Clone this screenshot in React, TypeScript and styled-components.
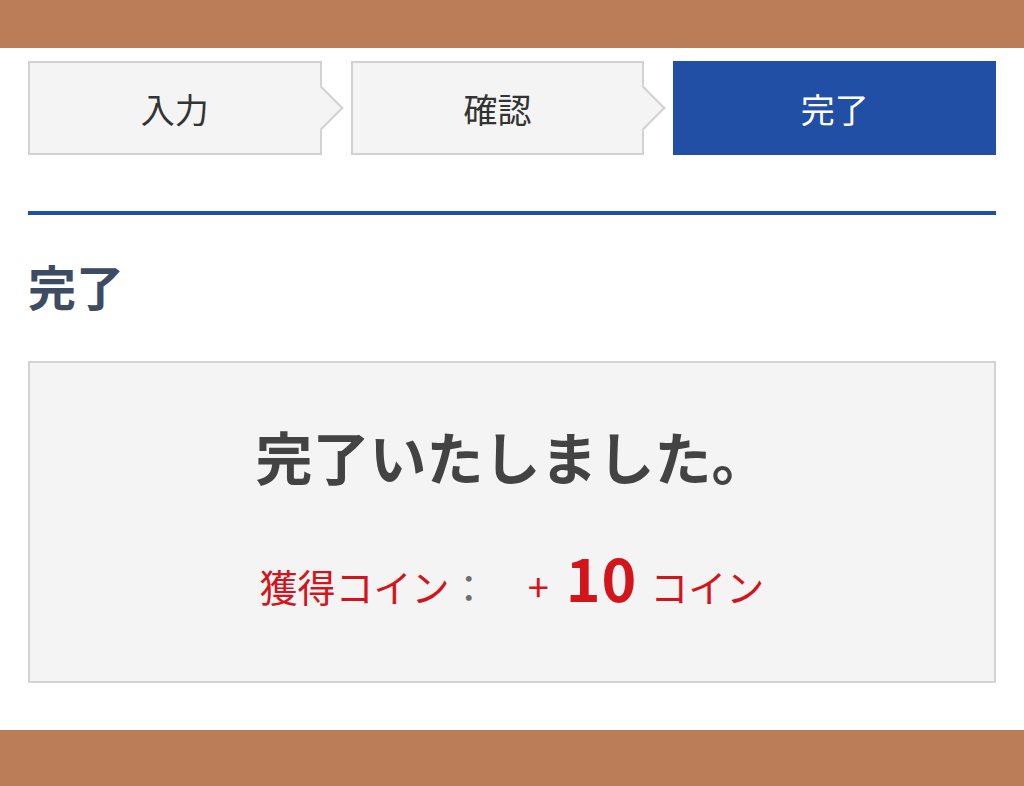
import * as React from 'react';
import styled, { createGlobalStyle } from 'styled-components';

const GlobalStyle = createGlobalStyle`
    html, body {
        margin: 0;
        padding: 0;
        background: #fff;
    }
    body {
        font-family: "Noto Sans CJK JP", "Noto Sans", sans-serif;
    }
`

const Page = styled.div`
    display: flex;
    flex-direction: column;
    height: 786px;
`
const Bar = styled.div<{ $h: number }>`
    background: #bb7c58;
    height: ${p => p.$h}px;
    flex-shrink: 0;
`
const Main = styled.main`
    flex: 1;
    padding: 13px 28px 0;
`
const Steps = styled.ol`
    display: grid;
    grid-template-columns: repeat(3, 1fr);
    list-style: none;
    margin: 0;
    padding: 0;
`
interface StepProps {
    $active?: boolean,
    $arrow?: boolean,
}
const Step = styled.li<StepProps>`
    position: relative;
    height: 94px;
    box-sizing: border-box;
    margin-right: ${p => (p.$arrow ? '29px' : '0')};
    display: flex;
    align-items: center;
    justify-content: center;
    font-size: 34px;
    color: ${p => (p.$active ? '#fff' : '#333')};
    background: ${p => (p.$active ? '#214fa5' : '#f4f4f4')};
    border: 2px solid ${p => (p.$active ? '#214fa5' : '#d2d2d2')};
    &::after {
        content: '';
        display: ${p => (p.$arrow ? 'block' : 'none')};
        position: absolute;
        right: -17px;
        top: 50%;
        width: 30px;
        height: 30px;
        margin-top: -16px;
        background: #f4f4f4;
        border-top: 2px solid #d2d2d2;
        border-right: 2px solid #d2d2d2;
        transform: rotate(45deg);
    }
    span {
        position: relative;
        z-index: 1;
    }
`
const Divider = styled.hr`
    margin: 56px 0 0;
    border: 0;
    height: 4px;
    background: #2150a3;
`
const Heading = styled.h2`
    margin: 46px 0 0;
    font-size: 48px;
    line-height: 1;
    font-weight: 700;
    color: #3d4b63;
`
const Result = styled.section`
    margin-top: 52px;
    height: 322px;
    box-sizing: border-box;
    background: #f4f4f4;
    border: 2px solid #d3d3d3;
    display: flex;
    flex-direction: column;
    align-items: center;
    padding-top: 64px;
`
const Message = styled.p`
    margin: 0;
    font-size: 57px;
    line-height: 1;
    font-weight: 700;
    color: #434343;
`
const Coins = styled.p`
    margin: 63px 0 0;
    display: flex;
    align-items: baseline;
    color: #d4141b;
    font-size: 38px;
    line-height: 1;
`
const Colon = styled.span`
    color: #6e6e6e;
    margin-right: 40px;
`
const Plus = styled.span`
    margin-right: 17px;
`
const Amount = styled.span`
    font-size: 59px;
    font-weight: 700;
    margin-right: 13px;
    letter-spacing: 1px;
`

const steps = ['入力', '確認', '完了']

const App: React.FC = () => {
    return (
        <Page>
            <GlobalStyle />
            <Bar $h={48} />
            <Main>
                <Steps>
                    {steps.map((s, i) => (
                        <Step key={s} $active={i === 2} $arrow={i < 2}>
                            <span>{s}</span>
                        </Step>
                    ))}
                </Steps>
                <Divider />
                <Heading>完了</Heading>
                <Result>
                    <Message>完了いたしました。</Message>
                    <Coins>
                        <span>獲得コイン</span>
                        <Colon>：</Colon>
                        <Plus>+</Plus>
                        <Amount>10</Amount>
                        <span>コイン</span>
                    </Coins>
                </Result>
            </Main>
            <Bar $h={56} />
        </Page>
    )
}

export default App
